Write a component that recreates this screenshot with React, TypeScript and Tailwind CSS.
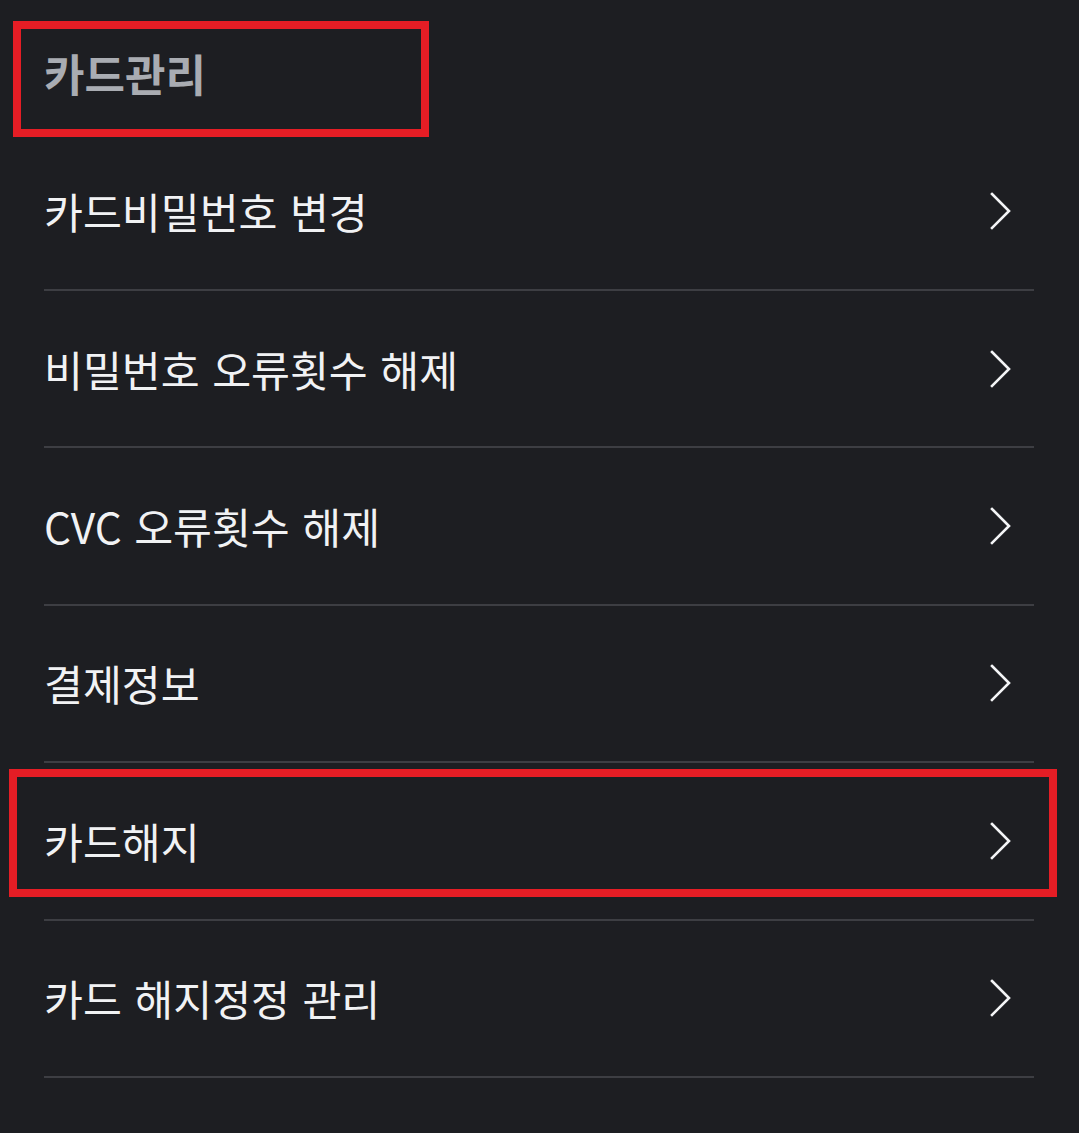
import React from "react";

const items = [
  "카드비밀번호 변경",
  "비밀번호 오류횟수 해제",
  "CVC 오류횟수 해제",
  "결제정보",
  "카드해지",
  "카드 해지정정 관리",
];

function Chevron() {
  return (
    <svg width="21" height="38" viewBox="0 0 21 38" fill="none" className="block">
      <polyline
        points="2,2 19,19 2,36"
        stroke="#f4f5f7"
        strokeWidth="2.6"
        strokeLinecap="square"
        strokeLinejoin="miter"
      />
    </svg>
  );
}

export default function App() {
  return (
    <div
      className="relative w-full min-h-[1133px] bg-[#1d1e22] overflow-hidden"
      style={{ fontFamily: '"Noto Sans CJK KR", "Noto Sans", sans-serif' }}
    >
      <div className="h-[133.6px] flex items-center pl-[44px] pt-[12px]">
        <h1 className="text-[44px] leading-none font-bold text-[#a9acb2]">
          카드관리
        </h1>
      </div>
      <ul className="px-[44px] w-[1078px]">
        {items.map((t) => (
          <li
            key={t}
            className="h-[157.4px] border-b-2 border-[#3d3e43] flex items-center justify-between"
          >
            <span className="text-[42.3px] leading-none font-normal text-[#f1f2f4] [word-spacing:3px]">
              {t}
            </span>
            <span className="mr-[23px]">
              <Chevron />
            </span>
          </li>
        ))}
      </ul>
      <div className="absolute left-[13px] top-[21px] w-[416px] h-[116px] border-[8px] border-[#e51d25]" />
      <div className="absolute left-[9px] top-[769px] w-[1048px] h-[128px] border-[8px] border-[#e51d25]" />
    </div>
  );
}
